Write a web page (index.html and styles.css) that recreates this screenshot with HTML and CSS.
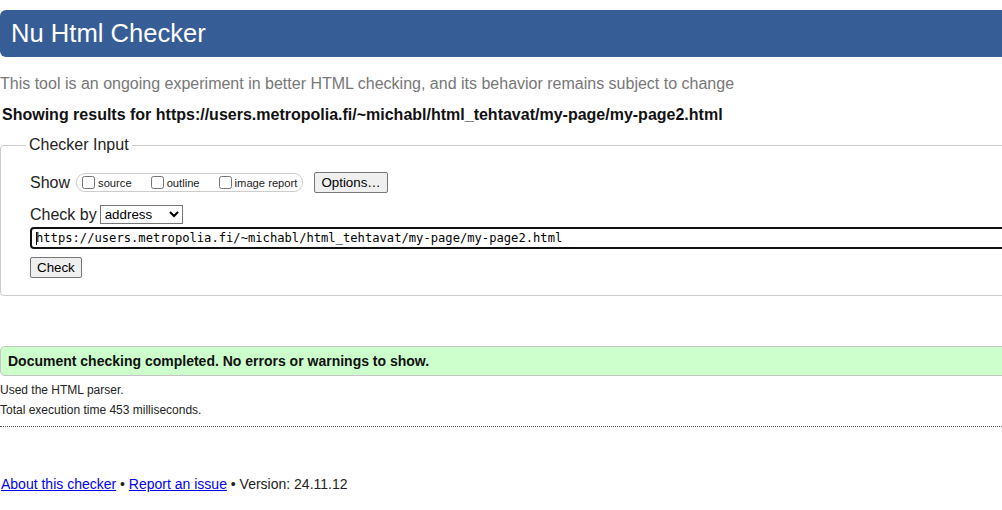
FILE: index.html
```html
<!DOCTYPE html>
<html lang="en">
<head>
<meta charset="utf-8">
<title>Showing results for https://users.metropolia.fi/~michabl/html_tehtavat/my-page/my-page2.html - Nu Html Checker</title>
<link rel="stylesheet" href="styles.css">
</head>
<body>
<h1 class="title">Nu Html Checker</h1>
<p class="tagline">This tool is an ongoing experiment in better HTML checking, and its behavior remains subject to change</p>
<p class="results-for">Showing results for https://users.metropolia.fi/~michabl/html_tehtavat/my-page/my-page2.html</p>
<form class="checker-form">
  <fieldset class="checker">
    <legend class="checker-legend">Checker Input</legend>
    <div class="row row-show">
      <span class="row-label">Show</span>
      <span class="show-options">
        <label class="opt"><input type="checkbox" class="cb">source</label>
        <label class="opt"><input type="checkbox" class="cb">outline</label>
        <label class="opt"><input type="checkbox" class="cb">image report</label>
      </span>
      <button type="button" class="btn btn-options">Options…</button>
    </div>
    <div class="row row-checkby">
      <span class="row-label">Check by</span>
      <select class="select"><option>address</option></select>
    </div>
    <div class="row row-url">
      <span class="url-wrap"><input class="url" type="text" value="https://users.metropolia.fi/~michabl/html_tehtavat/my-page/my-page2.html"></span>
    </div>
    <div class="row row-submit">
      <button type="button" class="btn btn-check">Check</button>
    </div>
  </fieldset>
</form>
<div class="success">Document checking completed. No errors or warnings to show.</div>
<p class="details">Used the HTML parser.</p>
<p class="details">Total execution time 453 milliseconds.</p>
<hr class="sep">
<p class="footer"><a href="#">About this checker</a> • <a href="#">Report an issue</a> • Version: 24.11.12</p>
</body>
</html>
```

FILE: styles.css
```css
html {
  overflow: hidden;
}

body {
  margin: 0;
  font-family: "Liberation Sans", Arial, sans-serif;
  font-size: 16px;
  color: #222;
}

.title {
  margin: 10px -20px 0 0;
  padding: 8.8px 10px 8.8px 11px;
  font-size: 25.6px;
  line-height: 29.4px;
  font-weight: normal;
  background: #365d95;
  color: #fff;
  border-radius: 6px 0 0 6px;
}

.tagline {
  margin: 18px 0 0;
  line-height: 18.4px;
  color: #777;
}

.results-for {
  margin: 13px 0 0;
  padding-left: 2px;
  line-height: 18.4px;
  font-weight: bold;
  color: #111;
}

.checker-form {
  margin: 11px -20px 0 0;
}

.checker {
  margin: 0;
  padding: 0 0 17px 29px;
  border: 1px solid #ccc;
  border-radius: 4px;
  min-width: 0;
}

.checker-legend {
  margin-left: -4px;
  padding: 0 3px;
  font-size: 16px;
  line-height: 18.4px;
}

.row {
  display: flex;
  align-items: center;
}

.row-show {
  margin-top: 18px;
  height: 21px;
}

.row-label {
  font-size: 16px;
  line-height: 18.4px;
}

.show-options {
  display: inline-flex;
  align-items: center;
  box-sizing: border-box;
  height: 19px;
  margin-left: 6px;
  padding: 0 5px 0 1px;
  border: 1px solid #ccc;
  border-radius: 9px;
}

.opt {
  display: inline-flex;
  align-items: center;
  font-size: 11.2px;
  line-height: 14px;
  padding-top: 1px;
}

.opt + .opt {
  margin-left: 15px;
}

.cb {
  width: 13px;
  height: 13px;
  margin: 0 3px 0 4px;
  position: relative;
  top: -1px;
}

.btn {
  box-sizing: border-box;
  height: 21px;
  padding: 1px 6px;
  font-family: "Liberation Sans", Arial, sans-serif;
  font-size: 13.33px;
  color: #000;
  background: #efefef;
  border: 1px solid #767676;
  border-radius: 2px;
}

.btn-options {
  margin-left: 11px;
}

.row-checkby {
  margin-top: 12px;
  height: 19px;
}

.select {
  box-sizing: border-box;
  width: 83px;
  height: 19px;
  margin-left: 3px;
  font-family: "Liberation Sans", Arial, sans-serif;
  font-size: 13.33px;
  color: #000;
  background: #fff;
  border: 1px solid #767676;
  border-radius: 0;
}

.row-url {
  margin-top: 3px;
}

.url-wrap {
  position: relative;
  display: block;
  width: 100%;
}

.url-wrap::after {
  content: "";
  position: absolute;
  left: 6px;
  top: 5px;
  width: 1px;
  height: 13px;
  background: #000;
}

.url {
  display: block;
  box-sizing: border-box;
  width: 100%;
  height: 22px;
  margin: 0;
  padding: 0 4px;
  font-family: "DejaVu Sans Mono", "Liberation Mono", monospace;
  font-size: 12.15px;
  color: #000;
  background: #fff;
  border: 2px solid #101010;
  border-radius: 4px;
  outline: none;
}

.row-submit {
  margin-top: 8px;
}

.success {
  margin: 50px -20px 0 0;
  padding: 6px 7px;
  font-size: 14px;
  line-height: 16.1px;
  font-weight: bold;
  color: #111;
  background: #ccffcc;
  border: 1px solid #c4c4c4;
  border-radius: 5px 0 0 5px;
}

.details {
  margin: 0;
  font-size: 12px;
  line-height: 20px;
}

.success + .details {
  margin-top: 4px;
}

.sep {
  margin: 6px -20px 0 0;
  height: 0;
  border: 0;
  border-top: 1px dotted #555;
}

.footer {
  margin: 49px 0 0;
  padding-left: 1px;
  font-size: 14px;
  line-height: 16.1px;
}

.footer a {
  color: #0000ee;
}
```
